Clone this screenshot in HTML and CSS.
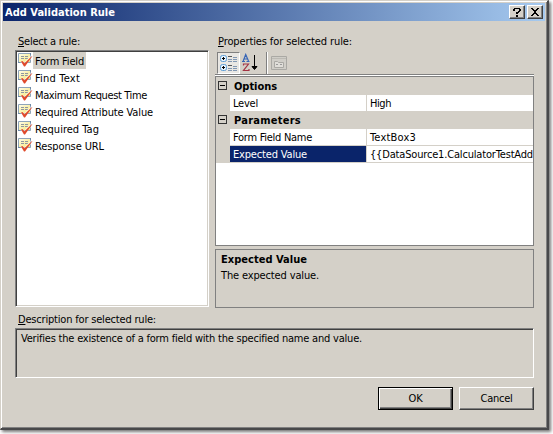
FILE: index.html
```
<!DOCTYPE html>
<html lang="en"><head><meta charset="utf-8"><title>Add Validation Rule</title><link rel="stylesheet" href="styles.css"></head>
<body>
<svg width="0" height="0" class="defs"><defs>
<linearGradient id="note" x2="1" y2="1"><stop offset="0" stop-color="#fffef0"/><stop offset="1" stop-color="#f5e56c"/></linearGradient>
<symbol id="rule" viewBox="0 0 16 16"><path d="M.5 1.500h12v9h-12z" fill="url(#note)" stroke="#8fa5ba"/><path d="M12.500 1v6M0 10.500h5" stroke="#6f8ba8"/><path d="M3 4.500h3M7 4.500h3M3 6.500h3M7 6.500h3" stroke="#8e979f"/><path d="M3.500 9.500l2.500 3L14 4" fill="none" stroke="#fff" stroke-width="3" opacity=".5"/><path d="M3 9.500L4.500 9 6.500 11.300 13.500 4.500 14.500 4 7 14.500H6z" fill="#e04a2c"/></symbol>
</defs></svg>
<main class="dialog">
<header class="titlebar"><h1 class="t" data-w="110">Add Validation Rule</h1><div class="caption-buttons">
<span class="cap"><svg width="14" height="12" shape-rendering="crispEdges"><path d="M4 2h6v1H4zM3 3h2v2H3zM9 3h2v2H9zM8 5h2v1H8zM6 6h3v1H6zM6 7h2v1H6zM6 9h2v2H6z"/></svg></span>
<span class="cap"><svg width="14" height="12" shape-rendering="crispEdges"><path d="M3 2h2v1h1v1h2V3h1V2h2v1h-1v1H9v1H8v2h1v1h1v1h1v1H9V9H8V8H6v1H5v1H3V9h1V8h1V7h1V5H5V4H4V3H3z"/></svg></span></div></header>
<div class="body">
<div class="columns">
<section class="rules"><label class="label"><span class="t" data-w="62"><u>S</u>elect a rule:</span></label>
<ul class="list">
<li class="selected"><svg><use href="#rule"/></svg><span class="name"><span class="t" data-w="49">Form Field</span></span></li>
<li><svg><use href="#rule"/></svg><span class="name"><span class="t" data-w="45">Find Text</span></span></li>
<li><svg><use href="#rule"/></svg><span class="name"><span class="t" data-w="112">Maximum Request Time</span></span></li>
<li><svg><use href="#rule"/></svg><span class="name"><span class="t" data-w="118">Required Attribute Value</span></span></li>
<li><svg><use href="#rule"/></svg><span class="name"><span class="t" data-w="64">Required Tag</span></span></li>
<li><svg><use href="#rule"/></svg><span class="name"><span class="t" data-w="69">Response URL</span></span></li>
</ul></section>
<section class="properties"><label class="label"><span class="t" data-w="134"><u>P</u>roperties for selected rule:</span></label>
<div class="toolbar"><span class="tool pressed"><svg width="20" height="20"><g fill="#e6f3ff" stroke="#5d9dd4"><rect x="2.500" y="2.500" width="6" height="6" rx="2"/><rect x="2.500" y="11.500" width="6" height="6" rx="2"/></g><path d="M4 5.500h3M5.500 4v3M4 14.500h3M5.500 13v3" stroke="#000"/><path d="M10 3.500h4M10 12.500h4" stroke="#555"/><path d="M10 6.500h4M10 8.500h4M10 15.500h4M10 17.500h4M15 4.500h4M15 6.500h4M15 8.500h4M15 13.500h4M15 15.500h4M15 17.500h4" stroke="#8298b3"/></svg></span>
<span class="tool"><svg width="20" height="20"><path d="M1 8.500h3M5.500 8.500h3M2.200 8l2.500-6.500L7.500 8M3 6h4" fill="none" stroke="#3765b5" stroke-width="1.200"/><path d="M2.500 12.500v-1.500h5L2.500 17.500h5.500V16" fill="none" stroke="#a33444" stroke-width="1.200"/><path d="M13.500 2v14M11 13.500l2.500 3 2.500-3z" stroke="#000" fill="#000"/></svg></span>
<i class="separator"></i><span class="tool disabled"><svg width="20" height="20"><path d="M2.500 3.500h15v13h-15z" fill="#d0cec8" stroke="#aaa9a4"/><path d="M3 5.500h14" stroke="#bcbab4"/><path d="M5.500 8.500h3l1 1h5v5h-9z" fill="#e0ded9" stroke="#aaa9a4"/><path d="M7 11.500h2m2 0h2" stroke="#999"/></svg></span></div>
<div class="grid">
<div class="category"><i class="minus"></i><b class="t" data-w="43">Options</b></div>
<div class="row"><div class="key"><span class="t" data-w="25">Level</span></div><div class="value"><span class="t" data-w="21">High</span></div></div>
<div class="category"><i class="minus"></i><b class="t" data-w="67">Parameters</b></div>
<div class="row"><div class="key"><span class="t" data-w="79">Form Field Name</span></div><div class="value"><span class="t" data-w="46">TextBox3</span></div></div>
<div class="row last"><div class="key active"><span class="t" data-w="74">Expected Value</span></div><div class="value"><span class="t" data-w="163">{{DataSource1.CalculatorTestAdd</span></div></div>
</div>
<div class="help"><b class="t" data-w="86">Expected Value</b><span class="t" data-w="98">The expected value.</span></div>
</section></div>
<section class="description"><label class="label"><span class="t" data-w="138"><u>D</u>escription for selected rule:</span></label><p class="desc"><span class="t" data-w="341">Verifies the existence of a form field with the specified name and value.</span></p></section>
<footer><button class="default"><span class="t" data-w="14">OK</span></button><button><span class="t" data-w="32">Cancel</span></button></footer>
</div></main>
<script src="script.js"></script>
</body></html>
```
FILE: styles.css
```
* { box-sizing: border-box; }
body { margin: 0; width: 553px; height: 434px; overflow: hidden; background: #fff; font: 11px/13px "DejaVu Sans Condensed", "DejaVu Sans", sans-serif; font-stretch: condensed; color: #000; }
.defs { position: absolute; }
.dialog { width: 549px; height: 430px; padding: 2px 2px 0 2px; background: #d4d0c8; border: solid; border-width: 1px 2px 2px 1px; border-color: #d4d0c8 #48484a #48484a #d4d0c8; box-shadow: inset 1px 1px #fff, inset -1px -1px #808080, 2px 2px 3px #777; }
.t { display: inline-block; white-space: pre; }
.titlebar { display: flex; align-items: center; justify-content: space-between; height: 18px; padding: 0 2px; background: linear-gradient(90deg, #0a246a, #a6caf0); color: #fff; }
h1 { margin: 0; font-size: 11px; line-height: 14px; font-weight: bold; padding-top: 2px; }
.caption-buttons { display: flex; gap: 2px; }
.cap { width: 16px; height: 14px; background: #d4d0c8; border: 1px solid; border-color: #fff #404040 #404040 #fff; box-shadow: inset -1px -1px #808080; }
.cap svg { display: block; }
.body { padding: 14px 12px 0; }
.columns { display: flex; gap: 6px; height: 272px; }
.label { display: block; height: 15px; padding-left: 3px; }
u { text-decoration: underline; text-underline-offset: 1px; }
.rules { width: 194px; }
.list { list-style: none; margin: 0; height: 257px; border: 1px solid; border-color: #808080 #fff #fff #808080; box-shadow: inset 1px 1px #404040, inset -1px -1px #d4d0c8; background: #fff; padding: 1px; }
.list li { display: flex; height: 17px; padding-left: 1px; }
.list svg { width: 16px; height: 16px; flex: none; margin-right: -1px; position: relative; z-index: 1; }
.name { height: 17px; padding: 3px 2px 0; }
.selected .name { background: #d4d0c8; }
.properties { width: 319px; }
.toolbar { display: flex; height: 25px; padding: 2px 2px 0; border-bottom: 1px solid #808080; }
.tool { width: 23px; height: 22px; padding: 1px; }
.pressed { border: 1px solid; border-color: #808080 #fff #fff #808080; background: #e9e7e3; padding: 0; }
.tool svg { display: block; }
.separator { width: 2px; margin: 0 3px; border-left: 1px solid #808080; border-right: 1px solid #fff; }
.disabled { margin-left: -3px; }
.grid { height: 170px; margin-top: 1px; border: 1px solid #808080; background: #fff; box-shadow: 0 -1px #fff; overflow: hidden; }
.category { display: flex; height: 18px; background: #d4d0c8; padding: 3px 0 0 2px; gap: 7px; }
.minus { width: 9px; height: 9px; margin-top: 1px; border: 1px solid #333; background: linear-gradient(#000, #000) 50% 50% / 5px 1px no-repeat; }
.row { display: flex; height: 17px; border-left: 14px solid #d4d0c8; border-bottom: 1px solid #d4d0c8; }
.row:nth-child(2) { height: 16px; border-bottom: 0; }
.key { width: 137px; flex: none; padding: 2px 0 0 3px; border-right: 1px solid #d4d0c8; }
.value { padding: 2px 0 0 3px; flex: 1; min-width: 0; overflow: hidden; }
.active { background: #0a246a; color: #fff; }
.help { height: 59px; margin-top: 3px; border: 1px solid #808080; padding: 3px 5px; }
.help .t { display: block; width: max-content; margin-bottom: 3px; }
.description { padding-top: 6px; }
.desc { margin: 0; height: 50px; padding: 3px 5px; border: 1px solid; border-color: #808080 #fff #fff #808080; box-shadow: inset 1px 1px #404040; }
footer { display: flex; justify-content: flex-end; gap: 6px; padding-top: 9px; }
.body > * { margin-right: -1px; }
button { width: 75px; height: 23px; padding: 0; font: inherit; font-stretch: condensed; background: #d4d0c8; border: 1px solid; border-color: #fff #404040 #404040 #fff; box-shadow: inset -1px -1px #808080; border-radius: 0; color: #000; }
button.default { border-color: #000; box-shadow: inset 1px 1px #fff, inset -1px -1px #404040, inset -2px -2px #808080; }
```
FILE: script.js
```
// Fit each caption to the metrics of the classic dialog font.
document.querySelectorAll('.t').forEach(function (el) {
  var width = el.getBoundingClientRect().width;
  var n = el.textContent.length;
  el.style.letterSpacing = ((Number(el.dataset.w) - width) / n) + 'px';
});
```
